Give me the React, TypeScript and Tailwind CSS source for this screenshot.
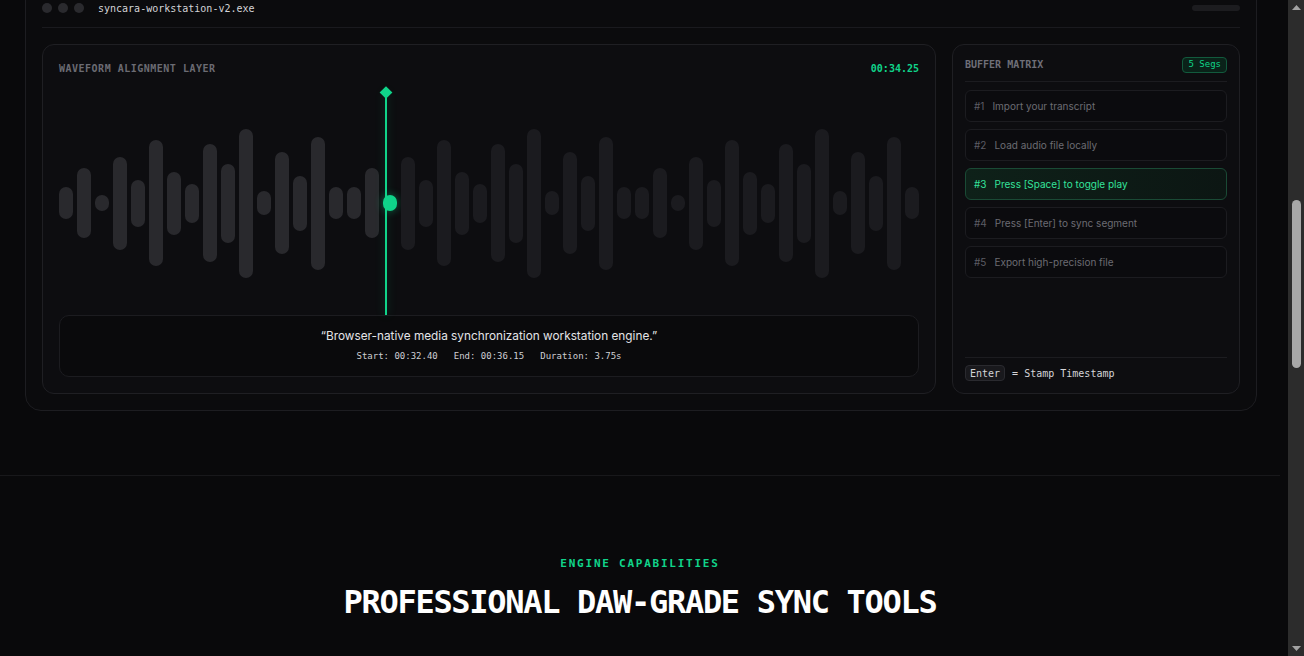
import React, { useEffect, useRef } from "react";

const mono = "font-['DejaVu_Sans_Mono',monospace]";
const sans = "font-['Inter','Noto_Sans',sans-serif]";

// one period of the waveform, repeated three times
const pattern = [32, 70, 16, 93, 47, 126, 63, 39, 118, 79, 149, 24, 102, 55, 133, 32];
const bars = [...pattern, ...pattern, ...pattern];
const activeBar = 18;

const segments = [
  { id: 1, text: "Import your transcript" },
  { id: 2, text: "Load audio file locally" },
  { id: 3, text: "Press [Space] to toggle play" },
  { id: 4, text: "Press [Enter] to sync segment" },
  { id: 5, text: "Export high-precision file" },
];

const WaveformPanel = () => {
  return (
    <div className="flex flex-col rounded-xl border border-[#1f1f23] bg-[#0d0d10] p-4">
      <div className="flex h-[14px] items-center justify-between">
        <span className={`${mono} text-[10px] font-bold tracking-[0.05em] text-[#6b6b73]`}>
          WAVEFORM ALIGNMENT LAYER
        </span>
        <span className={`${mono} text-[10px] font-bold text-[#10d48a]`}>00:34.25</span>
      </div>

      <div className="relative mt-4 flex h-[224px] items-center gap-1">
        {bars.map((h, i) => (
          <div
            key={i}
            className={
              i === activeBar
                ? "w-[14px] shrink-0 rounded-full bg-[#10d48a] shadow-[0_0_8px_rgba(16,212,138,0.45)]"
                : i < activeBar
                ? "w-[14px] shrink-0 rounded-full bg-[#29292d]"
                : "w-[14px] shrink-0 rounded-full bg-[#1b1b1f]"
            }
            style={{ height: i === activeBar ? 16 : h }}
          />
        ))}

        {/* playhead */}
        <div className="absolute bottom-0 left-[38%] top-0 w-[2px] -translate-x-1/2 bg-[#10d48a] shadow-[0_0_10px_rgba(16,212,138,0.3)]">
          <div className="absolute left-1/2 top-[-3.5px] h-[9px] w-[9px] -translate-x-1/2 rotate-45 bg-[#10d48a]" />
        </div>
      </div>

      <div className="rounded-[10px] border border-[#1c1c20] bg-[#0a0a0c] py-3 text-center">
        <p className={`${sans} text-[11.8px] leading-4 text-[#e4e4e7]`}>
          “Browser-native media synchronization workstation engine.”
        </p>
        <div className={`${mono} mt-1.5 flex h-[14px] items-center justify-center gap-4 text-[9px] text-[#cfcfd4]`}>
          <span>Start: 00:32.40</span>
          <span>End: 00:36.15</span>
          <span>Duration: 3.75s</span>
        </div>
      </div>
    </div>
  );
};

const BufferPanel = () => {
  return (
    <div className="flex flex-col rounded-xl border border-[#1f1f23] bg-[#0d0d10] p-3">
      <div className="flex items-center justify-between border-b border-[#1c1c20] pb-2">
        <span className={`${mono} text-[10px] font-bold leading-4 text-[#6f6f78]`}>BUFFER MATRIX</span>
        <span
          className={`${mono} flex h-4 items-center rounded border border-[#125a3d] bg-[#0a2219] px-[5px] text-[9px] text-[#10d48a]`}
        >
          5 Segs
        </span>
      </div>

      <div className="mt-2 flex flex-col gap-[7px]">
        {segments.map((s) =>
          s.id === 3 ? (
            <div
              key={s.id}
              className={`${sans} flex h-8 items-center gap-2 rounded-md border border-[#1a4a35] bg-gradient-to-r from-[#0e2119] to-[#0c1613] px-2 text-[10px] text-[#34e39b]`}
            >
              <span>#{s.id}</span>
              <span>{s.text}</span>
            </div>
          ) : (
            <div
              key={s.id}
              className={`${sans} flex h-8 items-center gap-2 rounded-md border border-[#1c1c20] bg-[#0b0b0e] px-2 text-[10px] text-[#6b6b73]`}
            >
              <span className="text-[#5c5c64]">#{s.id}</span>
              <span>{s.text}</span>
            </div>
          )
        )}
      </div>

      <div className="mt-auto flex items-center gap-[7px] border-t border-[#1c1c20] pt-[7px]">
        <kbd
          className={`${mono} flex h-4 items-center rounded border border-[#2a2a2f] bg-[#19191d] px-1 text-[10px] text-[#d4d4d8]`}
        >
          Enter
        </kbd>
        <span className={`${mono} text-[10px] text-[#d4d4d8]`}>= Stamp Timestamp</span>
      </div>
    </div>
  );
};

// the window's scrollbar, as it appears in the capture
const Scrollbar = () => (
  <div className="flex h-full w-4 shrink-0 flex-col items-center bg-[#2c2c2c]">
    <div className="flex h-[15px] items-center justify-center">
      <svg width="9" height="5" viewBox="0 0 9 5">
        <path d="M4.5 0L9 5H0z" fill="#a3a3a3" />
      </svg>
    </div>
    <div className="flex-1">
      <div className="mt-[185px] h-[168px] w-[9px] rounded-full bg-[#a8a8a8]" />
    </div>
    <div className="flex h-[15px] items-center justify-center">
      <svg width="9" height="5" viewBox="0 0 9 5">
        <path d="M0 0H9L4.5 5z" fill="#a3a3a3" />
      </svg>
    </div>
  </div>
);

export default function App() {
  const scroller = useRef<HTMLDivElement | null>(null);

  // page is shown scrolled down to the workstation preview
  useEffect(() => {
    if (scroller.current) scroller.current.scrollTop = 722;
  }, []);

  return (
    <div className="flex h-screen w-full overflow-hidden bg-[#09090b]">
      <div ref={scroller} className="h-full flex-1 overflow-hidden">
        <div className="w-[1280px]">
          <section className="pb-16 pt-[706px]">
            <div className="ml-[25px] w-[1232px] rounded-2xl border border-[#1d1d21] bg-[#0b0b0d] p-4">
              <div className="flex h-[14px] items-center">
                <div className="flex gap-1.5">
                  <span className="h-2.5 w-2.5 rounded-full bg-[#2a2a2e]" />
                  <span className="h-2.5 w-2.5 rounded-full bg-[#2a2a2e]" />
                  <span className="h-2.5 w-2.5 rounded-full bg-[#2a2a2e]" />
                </div>
                <span className={`${mono} ml-3.5 text-[10px] text-[#d4d4d8]`}>syncara-workstation-v2.exe</span>
                <span className="ml-auto h-1.5 w-12 rounded-full bg-[#1c1c1f]" />
              </div>
              <div className="mt-3 border-b border-[#1a1a1e]" />

              <div className="mt-4 grid grid-cols-[1fr_288px] gap-4">
                <WaveformPanel />
                <BufferPanel />
              </div>
            </div>
          </section>

          <section className="min-h-[1247px] border-t border-[#18181b] pt-20 text-center">
            <p className={`${mono} text-[11px] font-bold leading-4 tracking-[0.16em] text-[#10d48a]`}>
              ENGINE CAPABILITIES
            </p>
            <h2 className={`${mono} mt-[10px] text-[32px] font-bold leading-10 tracking-[-1.3px] text-white`}>
              PROFESSIONAL DAW-GRADE SYNC TOOLS
            </h2>
          </section>
        </div>
      </div>
      <Scrollbar />
    </div>
  );
}
